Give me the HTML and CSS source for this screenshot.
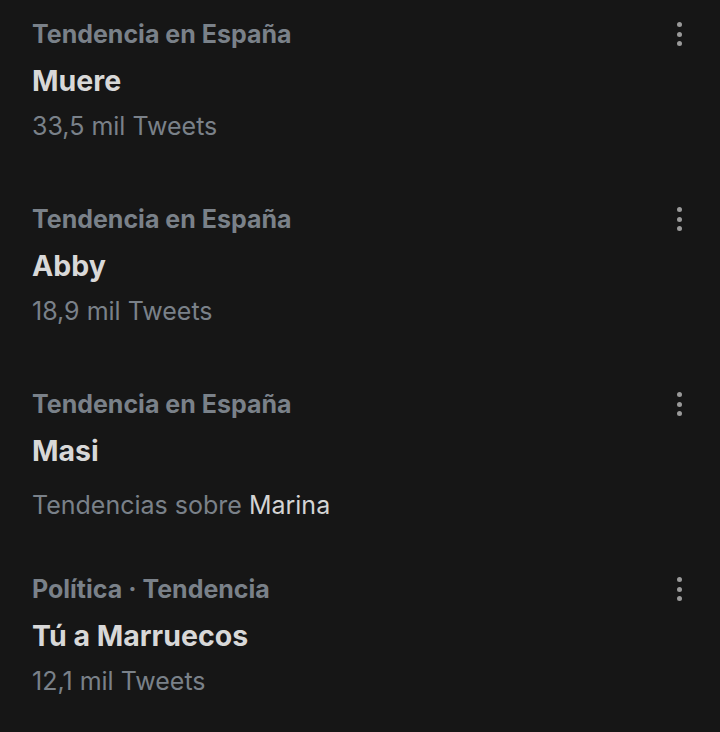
FILE: index.html
```
<!DOCTYPE html>
<html lang="es">
<head>
    <meta charset="UTF-8">
    <meta name="viewport" content="width=device-width, initial-scale=1.0">
    <title>Tendencias</title>
    <link rel="stylesheet" href="styles.css">
</head>
<body>
    <div class="trend-list">
        <div class="trend">
            <div class="trend-body">
                <div class="trend-context">Tendencia en España</div>
                <div class="trend-name">Muere</div>
                <div class="trend-count">33,5 mil Tweets</div>
            </div>
            <button class="trend-more" aria-label="Más opciones"><span></span><span></span><span></span></button>
        </div>

        <div class="trend">
            <div class="trend-body">
                <div class="trend-context">Tendencia en España</div>
                <div class="trend-name">Abby</div>
                <div class="trend-count">18,9 mil Tweets</div>
            </div>
            <button class="trend-more" aria-label="Más opciones"><span></span><span></span><span></span></button>
        </div>

        <div class="trend">
            <div class="trend-body">
                <div class="trend-context">Tendencia en España</div>
                <div class="trend-name">Masi</div>
                <div class="trend-related">Tendencias sobre <span class="related-name">Marina</span></div>
            </div>
            <button class="trend-more" aria-label="Más opciones"><span></span><span></span><span></span></button>
        </div>

        <div class="trend">
            <div class="trend-body">
                <div class="trend-context">Política · Tendencia</div>
                <div class="trend-name">Tú a Marruecos</div>
                <div class="trend-count">12,1 mil Tweets</div>
            </div>
            <button class="trend-more" aria-label="Más opciones"><span></span><span></span><span></span></button>
        </div>
    </div>
</body>
</html>
```

FILE: styles.css
```
* {
    box-sizing: border-box;
    font-family: Inter, Roboto, sans-serif;
}
body {
    margin: 0;
    background: #161616;
    color: #e0e0e0;
}
.trend-list {
    display: flex;
    flex-direction: column;
}
.trend {
    display: flex;
    justify-content: space-between;
    height: 185px;
    padding: 11px 0 0 32px;
}
.trend-context {
    font-size: 25px;
    font-weight: 700;
    line-height: 46px;
    color: #7a8189;
}
.trend-name {
    font-size: 28.5px;
    font-weight: 700;
    line-height: 48px;
    color: #d8d8d8;
}
.trend-count {
    font-size: 25px;
    line-height: 42px;
    color: #7a8189;
}
.trend-related {
    margin-top: 7px;
    font-size: 25px;
    line-height: 46px;
    color: #7a8189;
}
.related-name {
    color: #d4d4d4;
}
.trend-more {
    display: flex;
    flex-direction: column;
    align-items: center;
    gap: 4.5px;
    align-self: flex-start;
    margin: 11px 38px 0 0;
    padding: 0;
    width: 6px;
    background: none;
    border: none;
}
.trend-more span {
    width: 5px;
    height: 5px;
    border-radius: 50%;
    background: #9a9a9a;
}
```
